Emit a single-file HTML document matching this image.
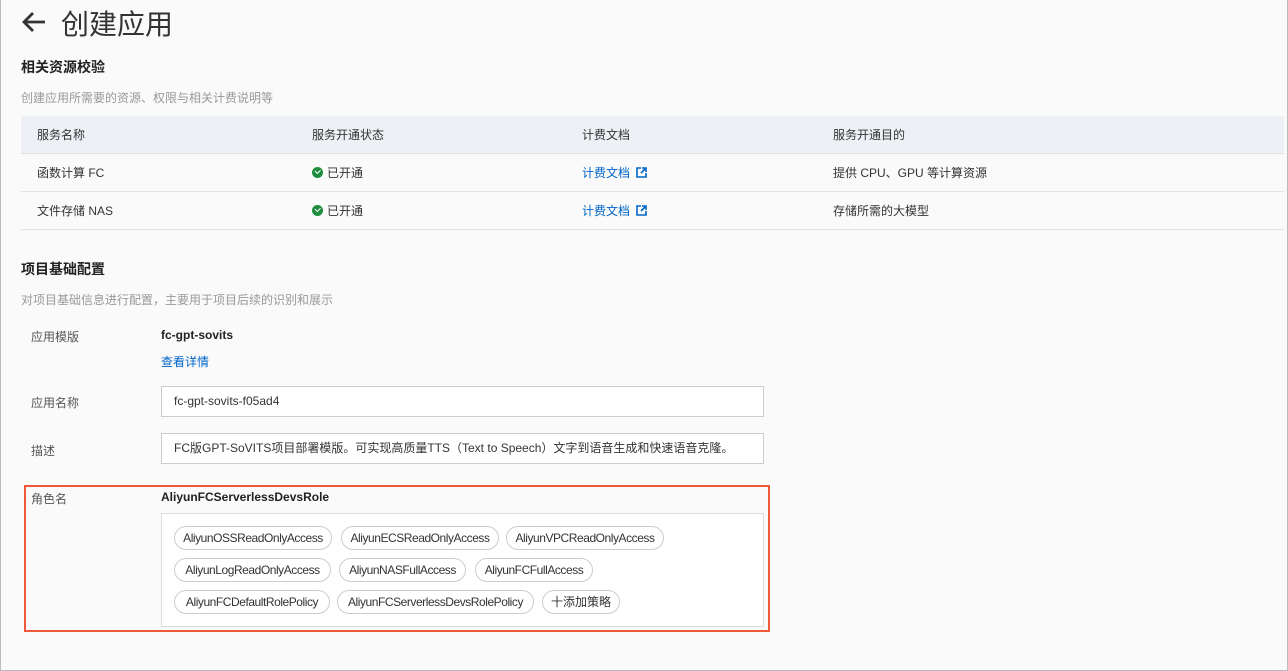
<!DOCTYPE html>
<html><head><meta charset="utf-8"><style>
*{margin:0;padding:0;box-sizing:border-box}
body{width:1288px;height:671px;background:#fafafa;font-family:"Liberation Sans","Noto Sans CJK SC",sans-serif;color:#333;position:relative;overflow:hidden}
.frame{position:absolute;left:0;top:0;width:1288px;height:671px;border:1px solid #bbb;border-top:none}
.a{position:absolute;white-space:nowrap}
.t12{font-size:12px}
.gray{color:#999}
.blue{color:#0064c8}
.tbl{position:absolute;left:21px;top:116px;width:1263px}
.hd{height:38px;background:#edf0f5;border-bottom:1px solid #e0e0e0;position:relative}
.row{height:38px;border-bottom:1px solid #e3e3e3;position:relative}
.c{position:absolute;top:0;line-height:38px;font-size:12px}
.ok{display:inline-block;width:11px;height:11px;border-radius:50%;background:#1e8e3e;vertical-align:-1px;margin-right:4px;position:relative}
.ok:after{content:"";position:absolute;left:3px;top:2px;width:4px;height:2.5px;border-left:1.5px solid #fff;border-bottom:1.5px solid #fff;transform:rotate(-45deg)}
.inp{position:absolute;left:161px;width:603px;height:31px;border:1px solid #ccc;background:#fff;font-size:12px;line-height:29px;padding-left:12px;color:#333}
.tag{position:absolute;height:24px;border:1px solid #c9ccd2;border-radius:12px;background:#fff;font-size:12px;line-height:22px;text-align:center;color:#333;letter-spacing:-0.45px;white-space:nowrap;overflow:hidden}
</style></head><body>
<div class="frame"></div>
<svg class="a" style="left:22px;top:12px" width="24" height="20" viewBox="0 0 24 20"><path d="M2 10H23M11 1L2 10L11 19" fill="none" stroke="#333" stroke-width="2.8"/></svg>
<div class="a" style="left:61px;top:3px;font-size:28px;color:#333">创建应用</div>
<div class="a" style="left:21px;top:57px;font-size:14px;font-weight:bold;color:#222">相关资源校验</div>
<div class="a t12 gray" style="left:21px;top:89px">创建应用所需要的资源、权限与相关计费说明等</div>
<div class="tbl">
<div class="hd"><span class="c" style="left:16px">服务名称</span><span class="c" style="left:291px">服务开通状态</span><span class="c" style="left:561px">计费文档</span><span class="c" style="left:812px">服务开通目的</span></div>
<div class="row"><span class="c" style="left:16px">函数计算 FC</span><span class="c" style="left:291px"><i class="ok"></i>已开通</span><span class="c blue" style="left:561px">计费文档 <svg width="11" height="11" viewBox="0 0 11 11" style="vertical-align:-1px;margin-left:3px"><path d="M5 1H1V10H10V6M6 1H10V5M10 1L5 6" fill="none" stroke="#0064c8" stroke-width="1.6"/></svg></span><span class="c" style="left:812px">提供 CPU、GPU 等计算资源</span></div>
<div class="row"><span class="c" style="left:16px">文件存储 NAS</span><span class="c" style="left:291px"><i class="ok"></i>已开通</span><span class="c blue" style="left:561px">计费文档 <svg width="11" height="11" viewBox="0 0 11 11" style="vertical-align:-1px;margin-left:3px"><path d="M5 1H1V10H10V6M6 1H10V5M10 1L5 6" fill="none" stroke="#0064c8" stroke-width="1.6"/></svg></span><span class="c" style="left:812px">存储所需的大模型</span></div>
</div>
<div class="a" style="left:21px;top:259px;font-size:14px;font-weight:bold;color:#222">项目基础配置</div>
<div class="a t12 gray" style="left:21px;top:291px">对项目基础信息进行配置，主要用于项目后续的识别和展示</div>
<div class="a t12" style="left:31px;top:328px;color:#555">应用模版</div>
<div class="a t12" style="left:161px;top:328px;font-weight:bold;color:#222">fc-gpt-sovits</div>
<div class="a t12 blue" style="left:161px;top:353px">查看详情</div>
<div class="a t12" style="left:31px;top:394px;color:#555">应用名称</div>
<div class="inp" style="top:386px">fc-gpt-sovits-f05ad4</div>
<div class="a t12" style="left:31px;top:442px;color:#555">描述</div>
<div class="inp" style="top:433px">FC版GPT-SoVITS项目部署模版。可实现高质量TTS（Text to Speech）文字到语音生成和快速语音克隆。</div>
<div class="a" style="left:24px;top:485px;width:746px;height:147px;border:2px solid #f0583a"></div>
<div class="a t12" style="left:31px;top:490px;color:#555">角色名</div>
<div class="a t12" style="left:161px;top:490px;font-weight:bold;color:#222">AliyunFCServerlessDevsRole</div>
<div class="a" style="left:161px;top:513px;width:603px;height:114px;border:1px solid #ddd;background:#fff"></div>
<div class="tag" style="left:174px;top:526px;width:158px">AliyunOSSReadOnlyAccess</div>
<div class="tag" style="left:341px;top:526px;width:158px">AliyunECSReadOnlyAccess</div>
<div class="tag" style="left:506px;top:526px;width:158px">AliyunVPCReadOnlyAccess</div>
<div class="tag" style="left:174px;top:558px;width:157px">AliyunLogReadOnlyAccess</div>
<div class="tag" style="left:339px;top:558px;width:127px">AliyunNASFullAccess</div>
<div class="tag" style="left:475px;top:558px;width:118px">AliyunFCFullAccess</div>
<div class="tag" style="left:174px;top:590px;width:156px">AliyunFCDefaultRolePolicy</div>
<div class="tag" style="left:337px;top:590px;width:197px">AliyunFCServerlessDevsRolePolicy</div>
<div class="tag" style="left:542px;top:590px;width:78px;letter-spacing:0">十添加策略</div>
</body></html>
